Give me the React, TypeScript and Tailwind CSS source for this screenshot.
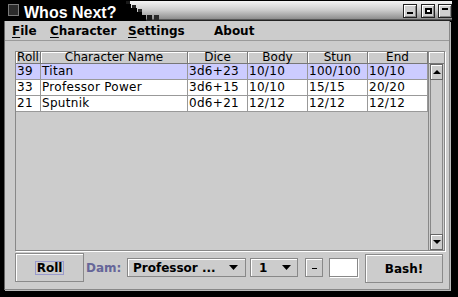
import React from "react";

interface Row {
  roll: string;
  name: string;
  dice: string;
  body: string;
  stun: string;
  end: string;
  sel: boolean;
}

const rows: Row[] = [
  { roll: "39", name: "Titan", dice: "3d6+23", body: "10/10", stun: "100/100", end: "10/10", sel: true },
  { roll: "33", name: "Professor Power", dice: "3d6+15", body: "10/10", stun: "15/15", end: "20/20", sel: false },
  { roll: "21", name: "Sputnik", dice: "0d6+21", body: "12/12", stun: "12/12", end: "12/12", sel: false },
];

const cols: { key: keyof Omit<Row, "sel">; label: string; w: string }[] = [
  { key: "roll", label: "Roll", w: "w-[25px]" },
  { key: "name", label: "Character Name", w: "w-[147px]" },
  { key: "dice", label: "Dice", w: "w-[60px]" },
  { key: "body", label: "Body", w: "w-[60px]" },
  { key: "stun", label: "Stun", w: "w-[60px]" },
  { key: "end", label: "End", w: "w-[60px]" },
];

function Down() {
  return (
    <svg width="9" height="5" viewBox="0 0 9 5">
      <polygon points="0,0 9,0 4.5,5" fill="#000" />
    </svg>
  );
}

function TitleBar() {
  return (
    <div className="h-[21px] mr-[6px] flex bg-[linear-gradient(to_bottom,#000_0px,#000_1px,#f4f4f4_1px,#cdcdcd_10px,#8e8e8e_19px,#222_20px)]">
      <div className="w-[123px] h-full bg-black flex items-start">
        <div className="ml-[8px] mt-[4px] w-[11px] h-[12px] bg-[#2b2b2b] border border-[#7a7a7a]" />
        <span className="ml-[5px] mt-[5px] leading-[16px] text-[16px] font-bold text-white font-['Liberation_Sans',sans-serif] whitespace-nowrap">
          Whos Next?
        </span>
      </div>
      {/* stepped edge of the black title block */}
      <svg width="40" height="21" viewBox="0 0 40 21" className="shrink-0">
        <rect x="0" y="0" width="3" height="21" fill="#000" />
        <rect x="0" y="4" width="8" height="17" fill="#000" />
        <rect x="7" y="8" width="7" height="13" fill="#000" />
        <rect x="13" y="12" width="6" height="9" fill="#000" />
        <rect x="18" y="15" width="5" height="6" fill="#000" />
        <rect x="3" y="1" width="4" height="3" fill="#1a1a1a" />
        <rect x="9" y="5" width="4" height="3" fill="#222" />
        <rect x="15" y="9" width="4" height="3" fill="#2a2a2a" />
        <rect x="24" y="15" width="5" height="5" fill="#1a1a1a" />
        <rect x="31" y="15" width="5" height="5" fill="#2a2a2a" />
      </svg>
      <div className="flex-1" />
      <div className="flex items-start">
        <div className="mt-[4px] w-[14px] h-[14px] bg-[#cfcfcf] border border-[#222] shadow-[inset_1px_1px_0_#fff,inset_-1px_-1px_0_#888] flex items-end justify-center">
          <div className="mb-[3px] w-[6px] h-[2px] bg-black" />
        </div>
        <div className="ml-[4px] mt-[4px] w-[14px] h-[14px] bg-[#cfcfcf] border border-[#222] shadow-[inset_1px_1px_0_#fff,inset_-1px_-1px_0_#888] flex items-center justify-center">
          <div className="w-[7px] h-[6px] border-2 border-black bg-white" />
        </div>
        <div className="ml-[3px] mt-[4px] w-[14px] h-[14px] bg-[#cfcfcf] border border-[#222] shadow-[inset_1px_1px_0_#fff,inset_-1px_-1px_0_#888] flex items-start justify-center">
          <div className="mt-[3px] w-[6px] h-[2px] bg-black" />
        </div>
      </div>
    </div>
  );
}

function MenuBar() {
  return (
    <div className="h-[20px] flex items-center pl-[7px] border-b border-[#9a9a9a] font-bold text-[12px] leading-[14px] shrink-0">
      <span className="w-[38px]">
        <span className="underline underline-offset-2">F</span>ile
      </span>
      <span className="w-[78px]">
        <span className="underline underline-offset-2">C</span>haracter
      </span>
      <span className="w-[86px]">
        <span className="underline underline-offset-2">S</span>ettings
      </span>
      <span>About</span>
    </div>
  );
}

function Table() {
  return (
    <div className="ml-[10px] mt-[10px] w-[430px] h-[200px] border border-[#888] shadow-[1px_1px_0_#fff] flex shrink-0">
      <div className="w-[412px] flex flex-col">
        <div className="h-[12px] flex border-b border-[#777] bg-[#cccccc]">
          {cols.map((c) => (
            <div
              key={c.key}
              className={`${c.w} h-full border-r border-[#777] shadow-[inset_1px_1px_0_#fff] text-center leading-[11px] whitespace-nowrap`}
            >
              {c.label}
            </div>
          ))}
        </div>
        {rows.map((r) => (
          <div
            key={r.roll}
            className={`h-[16px] flex border-b border-[#999] ${r.sel ? "bg-[#ccccff]" : "bg-white"}`}
          >
            {cols.map((c) => (
              <div
                key={c.key}
                className={`${c.w} h-full border-r border-[#999] pl-[1px] leading-[15px] tracking-[0.3px] whitespace-nowrap overflow-hidden`}
              >
                {r[c.key]}
              </div>
            ))}
          </div>
        ))}
        <div className="flex-1 bg-[#cccccc]" />
      </div>

      {/* scrollbar */}
      <div className="w-[16px] flex flex-col border-l border-[#888]">
        <div className="h-[12px] border-b border-[#777] shadow-[inset_1px_1px_0_#fff]" />
        <div className="h-[16px] mx-[1px] border border-[#666] bg-[#cccccc] shadow-[inset_1px_1px_0_#fff] flex items-center justify-center">
          <svg width="8" height="4" viewBox="0 0 8 4">
            <polygon points="0,4 4,0 8,4" fill="#000" />
          </svg>
        </div>
        <div className="flex-1 mx-[1px] border-x border-[#888] bg-[#cccccc]" />
        <div className="h-[16px] mx-[1px] border border-[#666] bg-[#cccccc] shadow-[inset_1px_1px_0_#fff] flex items-center justify-center">
          <svg width="8" height="4" viewBox="0 0 8 4">
            <polygon points="0,0 8,0 4,4" fill="#000" />
          </svg>
        </div>
      </div>
    </div>
  );
}

function Controls() {
  return (
    <div className="ml-[10px] mt-[2px] h-[30px] flex items-start font-bold text-[12px] shrink-0">
      <button className="w-[69px] h-[29px] border border-[#8a8a8a] shadow-[inset_1px_1px_0_#fff] bg-[#cccccc] flex items-center justify-center">
        <span className="px-[1px] border border-[#9999cc] leading-[12px] h-[14px] flex items-center">Roll</span>
      </button>
      <span className="ml-[2px] w-[41px] h-[29px] flex items-center text-[#666699]">Dam:</span>
      <div className="mt-[5px] w-[119px] h-[19px] border border-[#888] shadow-[inset_1px_1px_0_#fff] bg-[#cccccc] flex items-center pl-[5px] pr-[7px]">
        <span className="flex-1 whitespace-nowrap">Professor ...</span>
        <Down />
      </div>
      <div className="ml-[4px] mt-[5px] w-[48px] h-[19px] border border-[#888] shadow-[inset_1px_1px_0_#fff] bg-[#cccccc] flex items-center pl-[8px] pr-[6px]">
        <span className="flex-1">1</span>
        <Down />
      </div>
      <button className="ml-[7px] mt-[5px] w-[18px] h-[19px] border border-[#888] shadow-[inset_1px_1px_0_#fff] bg-[#cccccc] flex items-center justify-center font-normal">
        <div className="w-[5px] h-[1px] bg-black mt-[1px]" />
      </button>
      <div className="ml-[6px] mt-[5px] w-[29px] h-[19px] border border-[#888] shadow-[1px_1px_0_#fff] bg-white" />
      <button className="ml-[7px] mt-[1px] w-[78px] h-[29px] border border-[#8a8a8a] shadow-[inset_1px_1px_0_#fff] bg-[#cccccc] flex items-center justify-center">
        Bash!
      </button>
    </div>
  );
}

export default function App() {
  return (
    <div className="w-[458px] h-[297px] bg-black flex flex-col overflow-hidden font-['DejaVu_Sans',sans-serif] text-[12px] text-black">
      <TitleBar />
      <div className="ml-[4px] mr-[8px] h-[269px] bg-[#cccccc] border-l border-r border-b border-l-[#666] border-r-[#888] border-b-[#888] shadow-[1px_1px_0_#bbb] flex flex-col">
        <MenuBar />
        <Table />
        <Controls />
      </div>
    </div>
  );
}
